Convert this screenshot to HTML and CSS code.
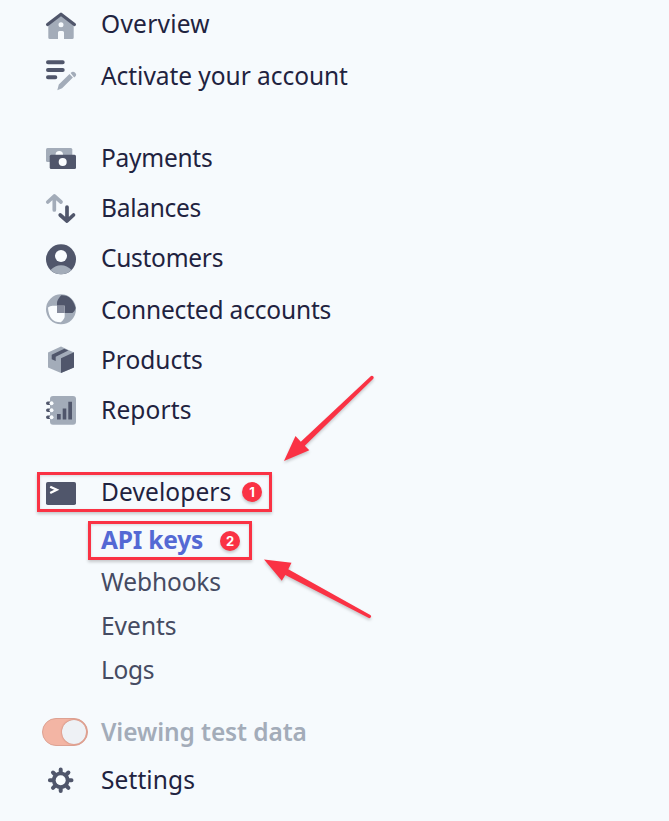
FILE: index.html
```html
<!DOCTYPE html>
<html lang="en">
<head>
<meta charset="utf-8">
<title>Dashboard navigation</title>
<link rel="stylesheet" href="styles.css">
</head>
<body>
<nav class="sidebar">
  <section class="group">
    <a class="item"><svg class="icon" viewBox="0 0 32 32"><path class="light" fill-rule="evenodd" d="M16 7 3.300 17v12.500q0 1.500 1.500 1.500H13v-6.500q0-1.500 1.500-1.500h3q1.500 0 1.500 1.500V31h8.200q1.500 0 1.500-1.500V17zM16 14.200a2.500 2.500 0 1 1 0 5 2.500 2.500 0 0 1 0-5z"/><path class="line" stroke-width="3.200" stroke-linecap="butt" d="M2.600 16.500 16 6.200l13.400 10.300"/></svg><span class="label overview">Overview</span></a>
    <a class="item wide"><svg class="icon" viewBox="0 0 32 32"><path class="line" stroke-width="4" d="M3 2.300h14.700M3 10h14.700M3 17.300h7.300"/><path class="light" d="m12.300 30.200 1.500-5.800L24.500 14l3.400 3.500-10.800 10.700zM25.600 12.900l1.300-.9q1.800-.7 3.500 1 1.400 1.600.4 3.100l-1.600 1.400z"/></svg><span class="label activate">Activate your account</span></a>
  </section>
  <section class="group">
    <a class="item"><svg class="icon" viewBox="0 0 32 32"><rect class="light" x="1" y="6" width="26.300" height="14" rx="1.500"/><circle class="paper" cx="14.300" cy="12.700" r="3.700"/><rect class="dark" x="4.700" y="12.800" width="26.300" height="14.200" rx="1.500"/><circle class="paper" cx="17.700" cy="19.900" r="4"/></svg><span class="label payments">Payments</span></a>
    <a class="item"><svg class="icon" viewBox="0 0 32 32"><path class="line pale" stroke-width="3.700" d="M9.300 18V4.500M2.800 10 9.300 4l6.700 6"/><path class="line" stroke-width="3.700" d="M22 15v13.500M15.200 23l6.800 6 6.500-6"/></svg><span class="label balances">Balances</span></a>
    <a class="item"><svg class="icon" viewBox="0 0 32 32"><circle class="dark" cx="16" cy="17.300" r="15"/><circle class="paper" cx="16" cy="14" r="6"/><path class="light" d="M5.500 28q4.500-4.700 10.500-4.700T26.500 28Q22 32.300 16 32.300T5.500 28z"/></svg><span class="label customers">Customers</span></a>
    <a class="item wide"><svg class="icon" viewBox="0 0 32 32"><circle class="light" cx="16" cy="15.300" r="15"/><path class="dark" d="M12 19V8.700q0-3 4.200-7.500Q27 .500 30.700 14q-.4 2.500-3.300 5z"/><path class="paper" d="M3 13.500q2-1.800 4.500-1.800h12.200v10.600q0 2.700-3.900 6Q3.800 28.500 3 13.500z"/><path class="mid" d="M12 11.700h7.700V19H12z"/></svg><span class="label connected">Connected accounts</span></a>
    <a class="item"><svg class="icon" viewBox="0 0 32 32"><path class="light" d="M3 8.500 16 2.600l13 5.900v15L16 29 3 23.500z"/><path class="dark" d="m16 14.300 13-6v15.200L16 29zM6.700 10.800l12.600-6 4 1.800-12.600 6.200v4.200l-4-1.800z"/></svg><span class="label">Products</span></a>
    <a class="item"><svg class="icon" viewBox="0 0 32 32"><rect class="light" x="5" y="2" width="26" height="28.700" rx="3"/><path class="dark" d="M12 20h3.700v5.500H12zM17.700 14.500h3.600v11h-3.600zM23.300 7.800H27v17.700h-3.700z"/><path class="line" stroke-width="3.600" d="M2.800 9.300h2M2.800 16.300h2M2.800 23.300h2"/><g class="paper"><circle cx="6.500" cy="9.300" r="2"/><circle cx="6.500" cy="16.300" r="2"/><circle cx="6.500" cy="23.300" r="2"/></g></svg><span class="label reports">Reports</span></a>
  </section>
  <section class="group">
    <a class="item framed"><svg class="icon" viewBox="0 0 32 32"><rect class="dark" x="1" y="6" width="30" height="23" rx="1.800"/><path class="prompt" d="m5.200 10.800 6.500 3-6.500 3.200"/></svg><span class="label developers">Developers</span><b class="badge">1</b></a>
    <div class="subnav">
      <a class="sub current"><span class="label keys">API keys</span><b class="badge">2</b></a>
      <a class="sub webhooks"><span class="label">Webhooks</span></a>
      <a class="sub events"><span class="label">Events</span></a>
      <a class="sub logs"><span class="label">Logs</span></a>
    </div>
  </section>
  <section class="footer">
    <a class="item muted"><span class="toggle"><i class="knob"></i></span><span class="label viewing">Viewing test data</span></a>
    <a class="item settings-row"><svg class="icon" viewBox="0 0 32 32"><g transform="translate(15.700 16.200)"><path class="line" stroke-width="4" d="M0-10.800v21.600M-10.800 0h21.600M-7.700-7.700 7.700 7.700M-7.700 7.700 7.700-7.700"/><circle class="dark" r="8.800"/><circle class="paper" r="5"/></g></svg><span class="label settings">Settings</span></a>
  </section>
</nav>
<svg class="arrows" viewBox="0 0 669 821">
  <path d="m284 461 11.500-25 5.300 5.800L371 376q1.500-.5 2.300.5t0 2.300l-68.500 67 4.500 4.500z"/>
  <path d="m264 559.500 27.500 3.300-3.200 6.400 82 45.700q1.300 1 .7 2.200t-2.200 1l-83.500-43.200-3.500 5.800z"/>
</svg>
</body>
</html>
```
FILE: styles.css
```css
* { box-sizing: border-box; }
body {
  margin: 0;
  height: 821px;
  overflow: hidden;
  background: #f6fafd;
  color: #1f2340;
  font: 24.5px/40px "Noto Sans", sans-serif;
}
.sidebar { padding: 4px 0 0 37px; }
.group { display: flex; flex-direction: column; align-items: flex-start; gap: 10px; }
.group + .group { margin-top: 42px; }
.item { display: flex; align-items: center; height: 40px; padding-left: 8px; }
.item.wide { margin-top: 2px; }
.icon { flex: none; width: 32px; height: 32px; margin-right: 24px; overflow: visible; }
.label { white-space: nowrap; }
.overview { letter-spacing: .25px; }
.activate { letter-spacing: -.05px; }
.payments, .balances, .customers { letter-spacing: -.27px; }
.connected { letter-spacing: -.17px; }
.reports { letter-spacing: .15px; }
.developers, .settings { letter-spacing: .1px; }
.light { fill: #a3acb9; }
.dark { fill: #50566b; }
.mid { fill: #858b9c; }
.paper { fill: #fafdff; }
.line { fill: none; stroke: #50566b; stroke-linecap: round; stroke-linejoin: round; }
.pale { stroke: #a3acb9; }
.prompt { fill: none; stroke: #fff; stroke-width: 2.3; }
.framed, .current {
  border: 3px solid #fa3244;
  box-shadow: 0 2px 3px #0003, inset 0 1px 3px #0002;
}
.framed { width: 235px; padding: 0 7px 0 5px; }
.subnav { margin: -1px 0 0 51px; color: #454b62; }
.sub { display: flex; align-items: center; height: 40px; padding-left: 13px; }
.current { width: 164px; height: 39px; padding: 0 9px 0 10px; color: #5469d4; font-weight: 700; }
.keys { margin-top: -2px; letter-spacing: -.18px; }
.webhooks { margin-top: 2px; letter-spacing: -.1px; }
.events, .logs { margin-top: 4px; }
.logs { letter-spacing: -.35px; }
.badge {
  flex: none;
  width: 20px;
  height: 20px;
  margin-left: auto;
  border-radius: 50%;
  background: #fa3244;
  box-shadow: 0 2px 3px #0003;
  color: #fff;
  font: 700 13px/20px Inter, sans-serif;
  letter-spacing: 0;
  text-align: center;
}
.footer { margin-top: 22px; }
.muted { padding-left: 5px; color: #a3acb9; font-weight: 600; }
.viewing { letter-spacing: -.1px; }
.toggle {
  display: flex;
  justify-content: flex-end;
  width: 46px;
  height: 28px;
  margin-right: 13px;
  padding: 1px;
  border: 1px solid #dda293;
  border-radius: 14px;
  background: #f3b5a4;
}
.knob { width: 24px; height: 24px; border-radius: 50%; background: #eef1f5; box-shadow: 0 0 2px #b66b5a; }
.settings-row { margin-top: 8px; }
.arrows {
  position: absolute;
  inset: 0;
  width: 669px;
  height: 821px;
  fill: #fa3244;
  filter: drop-shadow(0 2px 1.5px #0003);
  pointer-events: none;
}
```
